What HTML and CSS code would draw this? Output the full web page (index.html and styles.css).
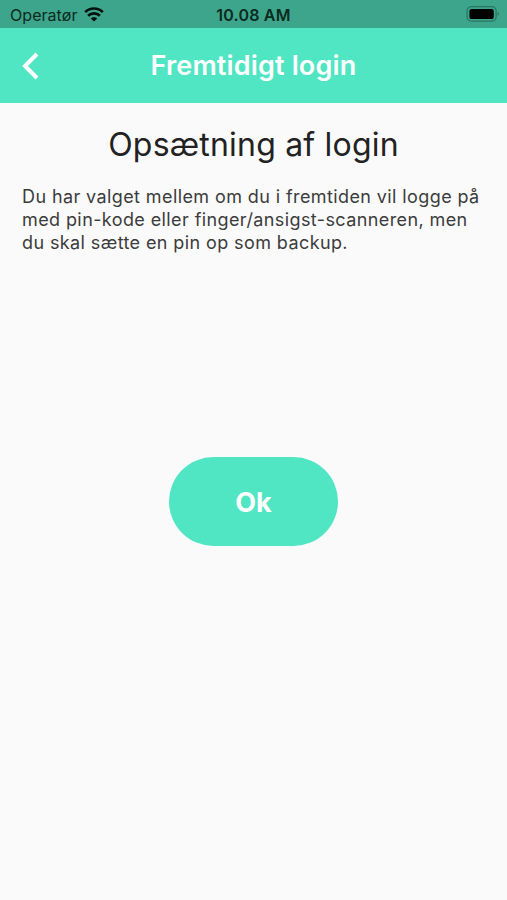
FILE: index.html
```html
<!DOCTYPE html>
<html lang="da">
<head>
<meta charset="utf-8">
<title>Fremtidigt login</title>
<link rel="stylesheet" href="styles.css">
</head>
<body>
<div class="status">
  <div class="carrier"><span class="operator">Operatør</span>
    <svg class="wifi" width="20" height="15" viewBox="0 0 20 15"><path d="M1.2 5.1A12.6 12.6 0 0 1 18.8 5.1M4.1 8.8A8.3 8.3 0 0 1 15.9 8.8" fill="none" stroke="#03120e" stroke-width="2.7"/><path d="M10 14.6L6.7 11.6a4.9 4.9 0 0 1 6.6 0z" fill="#03120e"/></svg>
  </div>
  <span class="time">10.08 AM</span>
  <svg class="battery" width="34" height="16" viewBox="0 0 34 16"><rect x="1.1" y=".7" width="29" height="14.4" rx="4.2" fill="none" stroke="#2b7663" stroke-width="1.3"/><rect x="3.4" y="2.9" width="24.4" height="10.2" rx="2.2" fill="#010403"/><path d="M31.6 5.8q2.6 2.2 0 4.4z" fill="#2b7663"/></svg>
</div>
<header class="bar">
  <svg class="back" width="18" height="28" viewBox="0 0 18 28"><path d="M15 2L3 14l12 12" fill="none" stroke="#fff" stroke-width="4"/></svg>
  <span class="bar-title">Fremtidigt login</span>
</header>
<main class="content">
  <h1 class="heading">Opsætning af login</h1>
  <p class="copy">Du har valget mellem om du i fremtiden vil logge på<br>med pin-kode eller finger/ansigst-scanneren, men<br>du skal sætte en pin op som backup.</p>
  <button class="ok">Ok</button>
</main>
</body>
</html>
```
FILE: styles.css
```css
* { box-sizing: border-box; }
body { margin: 0; height: 900px; overflow: hidden; background: #fafafa; color: #222; font-family: Inter, sans-serif; }
.status { display: grid; grid-template-columns: 1fr auto 1fr; align-items: center; height: 28px; padding: 0 7px 0 10px; background: #3da58b; color: #0b2a21; }
.carrier { display: flex; align-items: center; gap: 7px; }
.operator { padding-top: 1px; font-size: 16px; letter-spacing: .05px; }
.time { padding-top: 1px; margin-right: 3px; font-size: 16px; font-weight: 600; letter-spacing: .2px; }
.battery { justify-self: end; }
.bar { display: grid; grid-template-columns: 40px 1fr 40px; align-items: center; height: 75px; padding: 0 22px; background: #50e5c3; color: #fff; }
.bar-title { text-align: center; font-size: 27px; font-weight: 580; letter-spacing: .15px; white-space: nowrap; }
.content { display: flex; flex-direction: column; padding: 22px 22px 0; }
.heading { margin: 0; line-height: 40px; font-size: 32px; font-weight: 400; letter-spacing: .2px; text-align: center; }
.copy { margin: 20px 0 0; line-height: 23px; font-size: 18px; letter-spacing: .4px; white-space: nowrap; color: #3c3c3c; }
.ok { align-self: center; margin-top: 203px; width: 169px; height: 89px; padding: 2px 0 0; border: 0; border-radius: 45px; background: #50e5c3; color: #fff; font: 700 27px Inter, sans-serif; }
```
